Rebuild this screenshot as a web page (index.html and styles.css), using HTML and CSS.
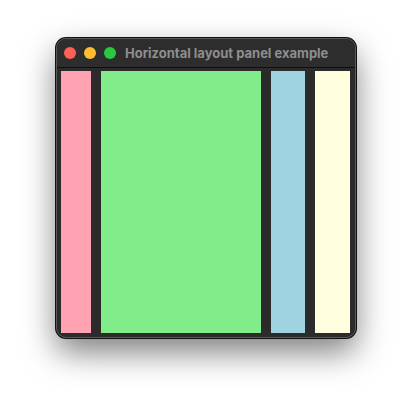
FILE: index.html
```html
<!DOCTYPE html>
<html>
<head>
<meta charset="utf-8">
<link rel="stylesheet" href="styles.css">
</head>
<body>
<div class="window">
  <div class="titlebar">
    <div class="lights">
      <span class="light red"></span>
      <span class="light yellow"></span>
      <span class="light green"></span>
    </div>
    <div class="title">Horizontal layout panel example</div>
  </div>
  <div class="content">
    <div class="col pink"></div>
    <div class="col lime"></div>
    <div class="col blue"></div>
    <div class="col cream"></div>
  </div>
</div>
</body>
</html>
```

FILE: styles.css
```css
html, body {
  margin: 0;
  padding: 0;
  background: #ffffff;
}
body {
  width: 412px;
  height: 412px;
  padding: 38px 0 0 56px;
  box-sizing: border-box;
}
.window {
  width: 300px;
  height: 300px;
  box-sizing: border-box;
  border-radius: 10px;
  background: #2b2b2b;
  border: 1px solid #5a5a5a;
  box-shadow: 0 0 0 1px #111, 0 14px 32px rgba(0,0,0,0.5);
  display: flex;
  flex-direction: column;
  overflow: hidden;
}
.titlebar {
  height: 28px;
  flex: none;
  display: flex;
  align-items: center;
  padding-left: 7px;
  border-bottom: 1px solid #0e0e0e;
  background: #2d2d2d;
}
.lights {
  display: flex;
  gap: 8px;
}
.light {
  width: 12px;
  height: 12px;
  border-radius: 50%;
  display: block;
}
.red { background: #fe5f57; }
.yellow { background: #febc2e; }
.green { background: #28c840; }
.title {
  margin-left: 9px;
  font-family: Inter, "Noto Sans", sans-serif;
  font-weight: 700;
  font-size: 13px;
  color: #8e8e8e;
  white-space: nowrap;
}
.content {
  flex: 1;
  display: flex;
  gap: 10px;
  padding: 3px 4px 4px 4px;
}
.col { height: 100%; }
.pink { width: 30px; background: #ffa2b1; }
.lime { width: 160px; background: #82eb8a; }
.blue { width: 34px; background: #a0d3e1; }
.cream { width: 35px; background: #ffffdf; }
```
